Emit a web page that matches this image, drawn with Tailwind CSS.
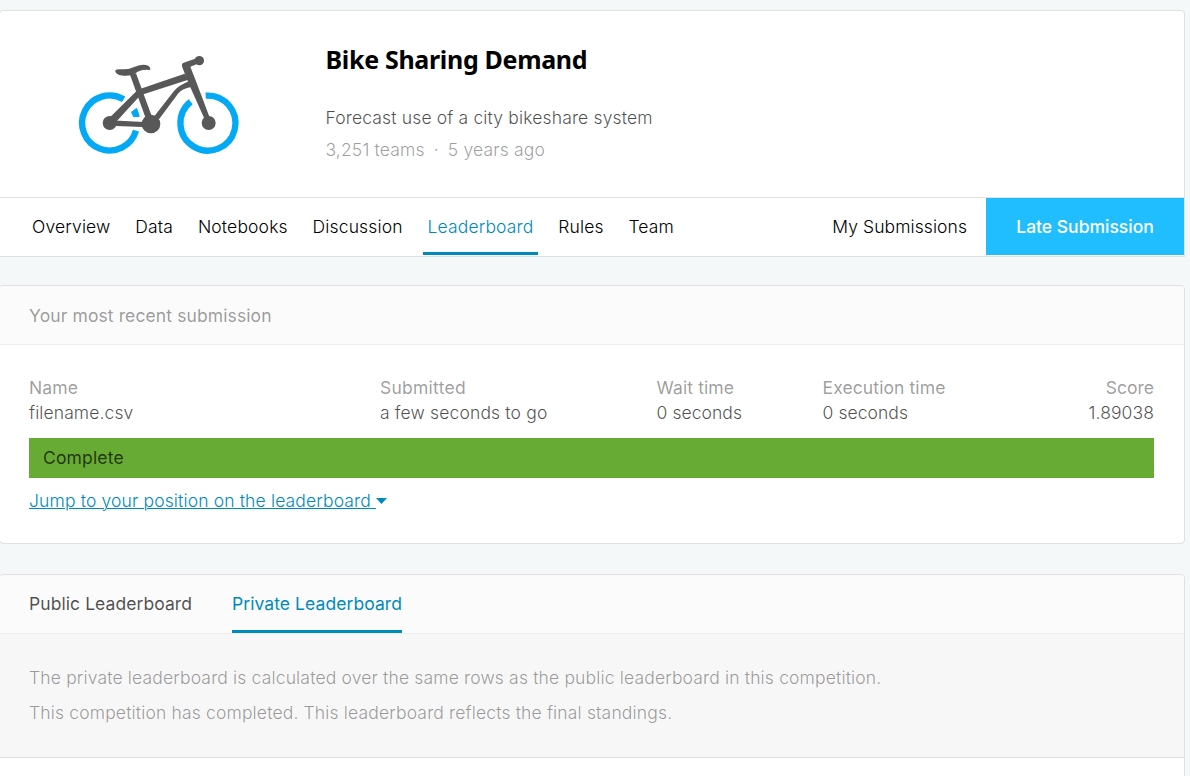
<!DOCTYPE html>
<html lang="en">
<head>
<meta charset="utf-8">
<title>Bike Sharing Demand</title>
<script src="https://cdn.jsdelivr.net/npm/@tailwindcss/browser@4"></script>
</head>
<body class="h-[776px] overflow-hidden bg-[#f5f8f9] pt-[10px] font-['Inter',sans-serif] text-[17.5px] font-light leading-[25px] tracking-[0.155px] text-black/70">
<header class="-ml-px h-[247px] w-[1186px] rounded-t-[4px] border border-[#dee0e1] bg-white">
  <div class="flex h-[186px]">
    <svg class="ml-[60px] mt-[29px] h-[130px] w-[200px] shrink-0" viewBox="0 0 600 390" fill="none">
      <g transform="translate(1)">
      <g stroke="#03a9f4" stroke-width="19">
        <path d="M190 178A82.500 82.500 0 1 0 227 272"/>
        <path d="M391 185A82.500 82.500 0 1 0 436 167"/>
      </g>
      <path d="M212 216L229 203Q236 216 238 231H219Z" fill="#03a9f4"/>
      <g fill="#585858">
        <circle cx="148" cy="249" r="21"/><circle cx="272" cy="252" r="28"/><circle cx="445" cy="249" r="21"/><circle cx="417" cy="62" r="14"/>
        <path d="M164 92Q168 87 183 88Q205 89 224 80Q247 70 264 77Q271 81 270 90Q240 86 226 100Q210 111 180 106Q168 103 164 92Z"/>
        <path d="M209 104L227 100L274 228L258 240Z"/>
        <path d="M143 238L231 151L241 165L158 256Z"/>
        <path d="M148 241L265 247V262L148 257Z"/>
        <path d="M230 150L373 101L384 119L240 166Z"/>
        <path d="M367 85Q360 69 374 67L411 54L416 70L390 80L411 134L452 243L437 247L386 133Z"/>
        <path d="M282 229L341 153Q352 137 389 122L395 140Q363 146 353 161L296 238Z"/>
      </g>
      </g>
    </svg>
    <div class="ml-[65.5px] pt-[32px]">
      <h1 class="font-['Noto_Sans',sans-serif] text-[25px] font-bold leading-8 tracking-[-0.320px] text-black">Bike Sharing Demand</h1>
      <p class="mt-[30px]">Forecast use of a city bikeshare system</p>
      <p class="mt-[7px] text-black/40">3,251 teams <span class="mx-[4px]">·</span> 5 years ago</p>
    </div>
  </div>
  <nav class="flex h-[59px] border-t border-[#dee0e1] text-black">
    <div class="flex h-[57px] gap-[14.8px] pl-[27px] leading-[58px]">
      <a class="px-[5px]">Overview</a><a class="px-[5px]">Data</a><a class="px-[5px]">Notebooks</a><a class="px-[5px]">Discussion</a><a class="border-b-[3px] border-[#008abc] px-[5px] text-[#008abc]">Leaderboard</a><a class="px-[5px]">Rules</a><a class="px-[5px]">Team</a>
    </div>
    <a class="ml-auto mr-[19px] leading-[58px] tracking-[0.080px]">My Submissions</a>
    <a class="h-[57px] w-[198px] bg-[#20beff] text-center font-medium leading-[58px] tracking-[0px] text-white">Late Submission</a>
  </nav>
</header>
<section class="-ml-px mt-[28px] h-[259px] w-[1186px] rounded-[4px] border border-[#dee0e1] bg-white">
  <h2 class="h-[59px] rounded-t-[3px] border-b border-black/5 bg-[#fbfbfb] pl-[29px] font-normal leading-[59px] tracking-[0.110px] text-black/40">Your most recent submission</h2>
  <div class="pt-[30px] pr-[30px] pl-[29px]">
    <dl class="grid grid-cols-[351px_276.6px_166px_1fr_auto] tracking-[0.100px]">
      <div><dt class="font-normal text-black/40">Name</dt><dd>filename.csv</dd></div>
      <div><dt class="font-normal tracking-[0.250px] text-black/40">Submitted</dt><dd class="tracking-[0.150px]">a few seconds to go</dd></div>
      <div><dt class="font-normal text-black/40">Wait time</dt><dd class="tracking-[0.050px]">0 seconds</dd></div>
      <div><dt class="font-normal text-black/40">Execution time</dt><dd class="tracking-[0.050px]">0 seconds</dd></div>
      <div class="text-right"><dt class="font-normal tracking-[0px] text-black/40">Score</dt><dd>1.89038</dd></div>
    </dl>
    <div class="mt-[13px] h-10 bg-[#67ab34] pl-[14px] font-normal leading-10">Complete</div>
    <a class="mt-[10px] flex items-center text-[#008abc]"><span class="whitespace-pre tracking-[0.145px] underline decoration-1 underline-offset-[1px]">Jump to your position on the leaderboard </span><svg class="h-[6px] w-[11px]" viewBox="0 0 11 6"><path d="M0 0H11L5.500 6Z" fill="#008abc"/></svg></a>
  </div>
</section>
<section class="-ml-px mt-[30px] h-[220px] w-[1186px] rounded-t-[4px] border border-[#dee0e1] bg-white">
  <div class="flex h-[59px] gap-[40px] rounded-t-[3px] border-b border-black/5 bg-[#fbfbfb] pl-[29px] font-normal leading-[58px] tracking-[0.070px]">
    <a>Public Leaderboard</a>
    <a class="border-b-[3px] border-[#008abc] text-[#008abc]">Private Leaderboard</a>
  </div>
  <div class="h-[124px] border-b border-[#dee0e1] bg-[#f7f7f7] pl-[29px] pt-[26px] leading-[35px] tracking-[0.160px] text-black/40">
    <p>The private leaderboard is calculated over the same rows as the public leaderboard in this competition.</p>
    <p>This competition has completed. This leaderboard reflects the final standings.</p>
  </div>
</section>
</body>
</html>
